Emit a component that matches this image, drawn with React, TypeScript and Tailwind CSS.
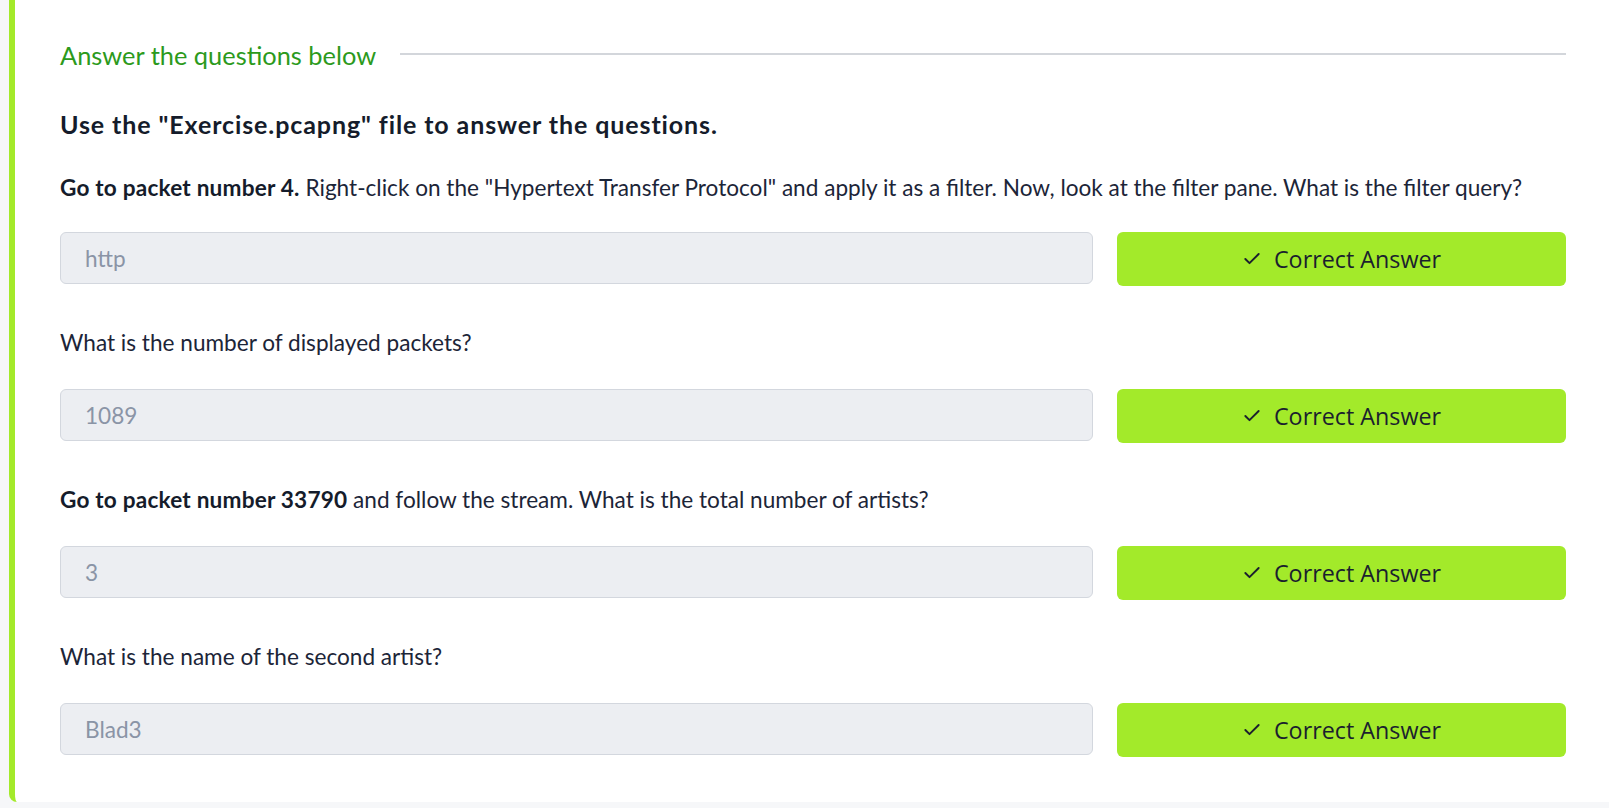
import React from "react";

const CheckIcon = () => (
  <svg width="20" height="20" viewBox="0 0 24 24" fill="none" stroke="currentColor" strokeWidth="2.3" strokeLinecap="round" strokeLinejoin="round">
    <path d="M20 6 9 17l-5-5" />
  </svg>
);

type Q = { bold?: string; text: string; answer: string };

const questions: Q[] = [
  {
    bold: "Go to packet number 4.",
    text: ' Right-click on the "Hypertext Transfer Protocol" and apply it as a filter. Now, look at the filter pane. What is the filter query?',
    answer: "http",
  },
  { text: "What is the number of displayed packets?", answer: "1089" },
  {
    bold: "Go to packet number 33790",
    text: " and follow the stream. What is the total number of artists?",
    answer: "3",
  },
  { text: "What is the name of the second artist?", answer: "Blad3" },
];

export default function App() {
  return (
    <div className="min-h-screen bg-[#f6f7f9] pl-[9px] pb-[5px] font-['Lato',sans-serif]">
      <div className="bg-white border-l-[6px] border-[#a3ea2a] rounded-bl-[8px] pl-[45px] pr-[43px] pt-[37px] pb-[45px]">
        <div className="flex items-center h-[36px]">
          <span className="text-[25.4px] leading-[36px] text-[#2c9a1c] whitespace-nowrap">Answer the questions below</span>
          <div className="flex-1 h-[2px] bg-[#d3d6db] ml-[24px] -mt-[3px]" />
        </div>
        <h3 className="mt-[35px] text-[25px] tracking-[0.9px] leading-[32px] font-bold text-[#151c2b]">
          Use the "Exercise.pcapng" file to answer the questions.
        </h3>
        <div className="mt-[32px] flex flex-col gap-[41px]">
          {questions.map((q, i) => (
            <div key={i} className={"flex flex-col " + (i === 0 ? "gap-[28px]" : "gap-[30px]")}>
              <p className="text-[22.6px] leading-[32px] text-[#1c2538] whitespace-nowrap">
                {q.bold && <strong className="font-bold tracking-[0.2px] text-[#151c2b]">{q.bold}</strong>}
                {q.text}
              </p>
              <div className="flex items-start gap-[24px]">
                <div className="flex-1 h-[52px] rounded-[6px] border border-[#d3d7de] bg-[#eceef2] flex items-center pl-[24px] pt-[1px] text-[22.6px] text-[#8a94a6]">
                  {q.answer}
                </div>
                <button className="w-[449px] h-[54px] rounded-[6px] bg-[#a3ea2a] flex items-center justify-center gap-[12px] text-[#1b1f2e] font-['Open_Sans',sans-serif] text-[23.3px]">
                  <CheckIcon />
                  <span>Correct Answer</span>
                </button>
              </div>
            </div>
          ))}
        </div>
      </div>
    </div>
  );
}
